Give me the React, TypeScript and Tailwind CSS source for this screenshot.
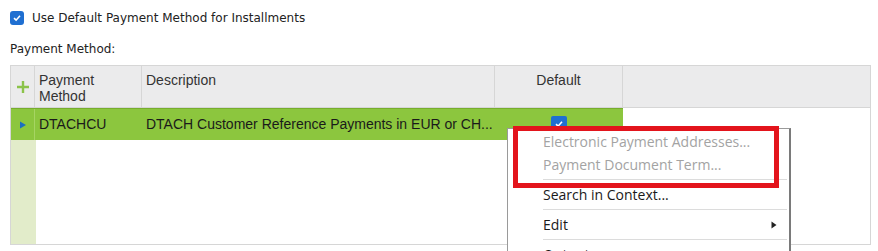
export default function App() {
  return (
    <div className="relative w-[878px] h-[251px] overflow-hidden bg-white text-[#333]">
      <div className="flex flex-col px-[10px] pt-[10px]">
        <div className="flex items-center gap-[8px] h-[15px]">
          <span className="flex h-[14px] w-[14px] items-center justify-center rounded-[3px] bg-[#1f6fd1]">
            <svg width="10" height="10" viewBox="0 0 10 10">
              <path d="M2 5.2 4.1 7.2 8 2.8" fill="none" stroke="white" strokeWidth="1.6" />
            </svg>
          </span>
          <span className="font-['DejaVu_Sans',sans-serif] text-[12px] text-[#222]">Use Default Payment Method for Installments</span>
        </div>
        <div className="mt-[17px] h-[15px] leading-[15px] font-['DejaVu_Sans',sans-serif] text-[12px] text-[#222]">Payment Method:</div>

        <div className="mt-[8px] flex h-[180px] w-[861px] flex-col border border-[#d6d6d6] font-['Liberation_Sans',sans-serif] text-[14px]">
          <div className="flex h-[42px] bg-[#ebebec] border-b border-[#d6d6d6]">
            <div className="flex w-[24px] items-center justify-center border-r border-[#d6d6d6]">
              <svg width="14" height="14" viewBox="0 0 14 14">
                <path d="M7 1v12M1 7h12" stroke="#8bc34a" strokeWidth="2.4" />
              </svg>
            </div>
            <div className="w-[107px] border-r border-[#d6d6d6] pl-[4px] pt-[6px] leading-[16px] text-[#333]">Payment<br />Method</div>
            <div className="w-[353px] border-r border-[#d6d6d6] pl-[4px] pt-[6px] leading-[16px] text-[#333]">Description</div>
            <div className="w-[128px] border-r border-[#d6d6d6] pt-[6px] text-center leading-[16px] text-[#333]">Default</div>
            <div className="flex-1" />
          </div>
          <div className="flex h-[32px]">
            <div className="flex w-[612px] items-center bg-[#8cc63e] border-t border-[#77ad2d]">
              <div className="flex h-full w-[24px] items-center justify-center border-r border-[#a6d463]">
                <svg width="8" height="8" viewBox="0 0 8 8">
                  <path d="M1 0.5 7 4 1 7.5Z" fill="#1a6fc2" />
                </svg>
              </div>
              <div className="w-[107px] pl-[4px] text-[#1a1a1a]">DTACHCU</div>
              <div className="w-[353px] pl-[4px] text-[#1a1a1a]">DTACH Customer Reference Payments in EUR or CH...</div>
              <div className="flex w-[128px] justify-center">
                <span className="mt-[-2px] flex h-[16px] w-[16px] items-center justify-center rounded-[2px] bg-[#1f6fd1]">
                  <svg width="10" height="10" viewBox="0 0 10 10">
                    <path d="M2 5.2 4.1 7.2 8 2.8" fill="none" stroke="white" strokeWidth="1.6" />
                  </svg>
                </span>
              </div>
            </div>
            <div className="flex-1" />
          </div>
          <div className="flex flex-1">
            <div className="w-[25px] bg-[#e2ecca]" />
            <div className="flex-1" />
          </div>
        </div>
      </div>

      <div className="absolute left-[507px] top-[128px] w-[284px] h-[140px] bg-white border-t border-l border-[#9a9a9a] border-r-[2px] border-r-[#7a7a7a] font-['Open_Sans',sans-serif] text-[14px]">
        <div className="flex flex-col pl-[35px] pr-[2px]">
          <div className="mt-[1px] h-[24px] leading-[24px] text-[#a3a3a3]">Electronic Payment Addresses...</div>
          <div className="h-[26px] leading-[22px] text-[#a3a3a3] border-b border-[#dcdcdc]">Payment Document Term...</div>
          <div className="h-[30px] leading-[29px] text-[#1a1a1a] border-b border-[#dcdcdc]">Search in Context...</div>
          <div className="flex h-[30px] items-center justify-between text-[#1a1a1a] border-b border-[#dcdcdc]">
            <span>Edit</span>
            <svg width="6" height="8" viewBox="0 0 6 8" className="mr-[10px]">
              <path d="M0.5 0.5 5.5 4 0.5 7.5Z" fill="#222" />
            </svg>
          </div>
          <div className="h-[30px] leading-[30px] text-[#1a1a1a]">Output...</div>
        </div>
        <div className="absolute left-[5px] top-[-3px] w-[266px] h-[62px] border-[5px] border-[#e3141c]" />
      </div>
    </div>
  );
}
